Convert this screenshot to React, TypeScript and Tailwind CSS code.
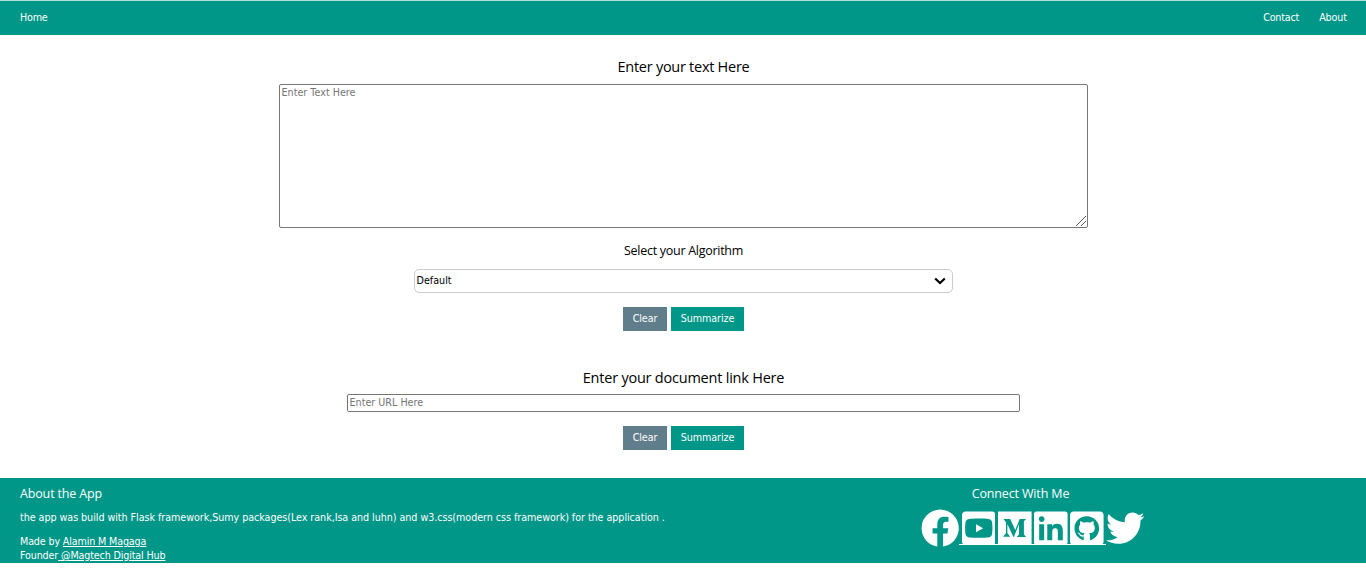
import { FaFacebook, FaYoutubeSquare, FaMedium, FaLinkedin, FaGithubSquare, FaTwitter } from "react-icons/fa";

const body = "font-['DejaVu_Sans',sans-serif]";
const head = "font-['Open_Sans','Noto_Sans',sans-serif]";

function Actions() {
  return (
    <div className="flex h-6 justify-center gap-1 text-[9.6px] leading-6 text-white">
      <button className="w-11 bg-[#607d8b] pl-px tracking-[-0.1px]">Clear</button>
      <button className="w-[73px] bg-[#009688] pl-px tracking-[-0.1px]">Summarize</button>
    </div>
  );
}

const icons = [
  { Icon: FaYoutubeSquare, name: "YouTube" },
  { Icon: FaMedium, name: "Medium" },
  { Icon: FaLinkedin, name: "LinkedIn" },
  { Icon: FaGithubSquare, name: "GitHub" },
];

export default function App() {
  return (
    <div className={`${body} h-[568px] overflow-hidden bg-white text-[9.6px] text-black`}>
      <nav className="flex h-[35px] items-center border-t border-[#b2dfdb] bg-[#009688] pl-5 pr-[19px] pt-px text-white">
        <a className="tracking-[-0.2px]">Home</a>
        <a className="ml-auto mr-5 tracking-[-0.2px]">Contact</a>
        <a className="tracking-[-0.1px]">About</a>
      </nav>

      <main className="flex h-[443px] flex-col items-center">
        <h3 className={`${head} mt-[21px] h-7 pl-px text-[14.5px] leading-[22px] tracking-[-0.27px]`}>Enter your text Here</h3>
        <div className="relative h-36 w-[809px] shrink-0">
          <textarea
            placeholder="Enter Text Here"
            className="block h-36 w-full resize-none rounded-[2px] border border-[#767676] px-[2px] pt-[2px] text-[9.6px] leading-3 placeholder:text-[#757575]"
          />
          <svg viewBox="0 0 12 12" className="absolute bottom-px right-px h-3 w-3" fill="none" stroke="#555" strokeWidth="1">
            <path d="M1 11 11 1M6 11 11 6" />
          </svg>
        </div>
        <h4 className={`${head} mt-[13px] h-7 pl-px text-[12.5px] leading-5 tracking-[-0.28px]`}>Select your Algorithm</h4>
        <div className="flex h-6 w-[539px] items-center justify-between rounded-[5px] border border-[#ccc] pl-[2px] pr-[6px]">
          <span className="pt-px">Default</span>
          <svg viewBox="0 0 12 8" className="h-2 w-3" fill="none" stroke="black" strokeWidth="2.2">
            <path d="M1.2 1.5 6 6 10.8 1.5" />
          </svg>
        </div>
        <div className="mt-[14px]">
          <Actions />
        </div>
        <h3 className={`${head} mt-9 h-[27px] pl-px text-[14.5px] leading-[22px] tracking-[-0.22px]`}>Enter your document link Here</h3>
        <input
          placeholder="Enter URL Here"
          className="h-[18px] w-[673px] rounded-[2px] border border-[#767676] px-[2px] pb-px text-[9.6px] placeholder:text-[#757575]"
        />
        <div className="mt-[14px]">
          <Actions />
        </div>
      </main>

      <footer className="flex h-[85px] justify-between bg-[#009688] pl-5 pr-[220px] text-white">
        <div>
          <h4 className={`${head} mt-[6px] text-[12.5px] leading-5 tracking-[-0.15px]`}>About the App</h4>
          <p className="mt-[7px] leading-[14px] tracking-[-0.05px]">
            the app was build with Flask framework,Sumy packages(Lex rank,Isa and luhn) and w3.css(modern css framework) for the application .
          </p>
          <p className="mt-[10px] leading-[14px] tracking-[-0.15px]">
            Made by <a className="underline">Alamin M Magaga</a>
            <br />
            Founder<a className="underline"> @Magtech Digital Hub</a>
          </p>
        </div>
        <div className="w-[225px]">
          <h4 className={`${head} mt-[6px] pr-[26px] text-center text-[12.5px] leading-5 tracking-[-0.15px]`}>Connect With Me</h4>
          <div className="mt-[5px] flex items-center">
            <FaFacebook className="h-[38.4px] w-[38.4px] shrink-0" title="Facebook" />
            <div className="flex h-[33px] gap-[2.6px] border-b border-white px-[2.4px]">
              {icons.map(({ Icon, name }) => (
                <Icon key={name} title={name} className="-mt-[2.5px] h-[38.4px] w-[33.6px] shrink-0" />
              ))}
            </div>
            <FaTwitter className="h-[38.4px] w-[38.4px] shrink-0" title="Twitter" />
          </div>
        </div>
      </footer>
    </div>
  );
}
